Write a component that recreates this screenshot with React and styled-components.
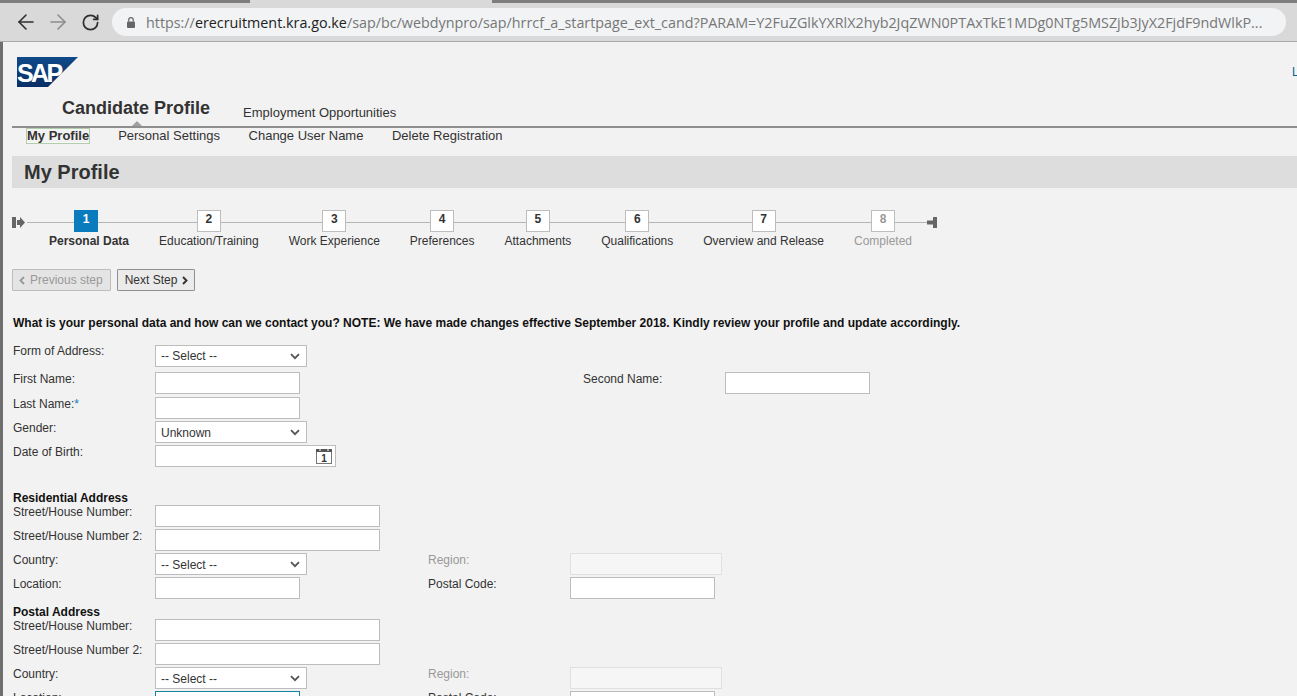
import React from 'react'
import styled, { createGlobalStyle } from 'styled-components'
import { ArrowLeft, ArrowRight, RotateCw } from 'lucide-react'

const GlobalStyle = createGlobalStyle`
  html, body {
    margin: 0;
    padding: 0;
    height: 100%;
    overflow: hidden;
    background: #f2f2f2;
  }
  * { box-sizing: border-box; }
`

const Screen = styled.div`
  width: 1297px;
  height: 696px;
  display: flex;
  flex-direction: column;
  overflow: hidden;
  font-family: "Liberation Sans", Arial, sans-serif;
  font-size: 12px;
  color: #333;
`

const TabStrip = styled.div`
  height: 3px;
  flex: none;
  background: linear-gradient(to right, #7e7e7e 250px, #d9d9d9 250px, #d9d9d9 492px, #7e7e7e 492px);
`

const Toolbar = styled.div`
  height: 39px;
  flex: none;
  display: flex;
  align-items: center;
  background: #d9d9d9;
  border-bottom: 1px solid #a9a9a9;
  padding-left: 14px;
`

const NavButton = styled.span`
  width: 32px;
  height: 24px;
  display: flex;
  align-items: center;
  padding-left: ${p => p.$inset || 0}px;
  color: ${p => p.$off ? '#8d8d8d' : '#2f2f2f'};
`

const UrlBar = styled.div`
  width: 1174px;
  height: 28px;
  margin-left: 2px;
  padding: 0 0 0 15px;
  display: flex;
  align-items: center;
  gap: 11px;
  border-radius: 14px;
  background: #f1f3f4;
  font-family: "Open Sans", sans-serif;
  font-size: 14.33px;
  color: #777;
  white-space: nowrap;
  overflow: hidden;
`

const Host = styled.span`
  color: #222;
`

const Window = styled.div`
  flex: 1;
  min-height: 0;
  border-left: 3px solid #6e6e6e;
  padding-left: 9px;
  overflow: hidden;
`

const Header = styled.header`
  height: 45px;
  padding: 15px 0 0 5px;
  display: flex;
  align-items: flex-start;
  justify-content: space-between;
`

const LogOff = styled.a`
  width: 50px;
  flex: none;
  margin: 8px -45px 0 0;
  font-size: 12px;
  color: #0a5f8f;
  white-space: nowrap;
`

const Tabs = styled.nav`
  height: 41px;
  display: flex;
  align-items: flex-end;
  padding: 0 0 0 50px;
  border-bottom: 2px solid #8e8e8e;
`

const Tab = styled.span`
  position: relative;
  font-size: ${p => p.$active ? '18px' : '13px'};
  font-weight: ${p => p.$active ? 700 : 400};
  line-height: 20px;
  margin: ${p => p.$active ? '0 33px 8px 0' : '0 0 3px 0'};

  ${p => p.$active && `
    &::after {
      content: '';
      position: absolute;
      left: 70px;
      bottom: -8px;
      border: 5px solid transparent;
      border-top: 0;
      border-bottom-color: #a0a0a0;
    }
  `}
`

const SubNav = styled.nav`
  height: 28px;
  display: flex;
  align-items: flex-start;
  padding: 0 0 0 14px;
  font-size: 13px;
`

const SubItem = styled.span`
  height: 16px;
  line-height: 14px;
  margin-right: 28.5px;
  padding-top: 1px;
  ${p => p.$active && `
    font-weight: 700;
    padding-top: 0;
    border: 1px solid #b4ccae;
    box-shadow: inset 0 0 0 1px #f7f9f5;
    margin-right: 28px;
  `}
`

const TitleBar = styled.div`
  height: 32px;
  display: flex;
  align-items: center;
  padding-left: 12px;
  background: #dddddd;
`

const PageTitle = styled.h1`
  margin: 0;
  font-size: 20px;
  font-weight: 700;
  color: #333;
`

const Track = styled.div`
  margin-top: 22px;
  display: flex;
  align-items: flex-start;
`

const TrackEnd = styled.div`
  height: 22px;
  width: ${p => p.$w}px;
  flex: none;
  padding-top: 7px;
  background: ${p => p.$line ? 'linear-gradient(#b5b5b5, #b5b5b5) 0 12px / 100% 1px no-repeat' : 'none'};
`

const Step = styled.div`
  display: flex;
  flex-direction: column;
  align-items: center;
  padding: 0 15px;
  background: linear-gradient(#b5b5b5, #b5b5b5) 0 12px / 100% 1px no-repeat;
`

const Marker = styled.span`
  width: 24px;
  height: 22px;
  margin-left: ${p => p.$state === 'active' ? '-6px' : '0'};
  line-height: 17px;
  text-align: center;
  font-weight: 700;
  background: ${p => p.$state === 'active' ? '#0a7cbd' : '#fff'};
  color: ${p => p.$state === 'active' ? '#fff' : p.$state === 'off' ? '#999' : '#333'};
  border: 1px solid ${p => p.$state === 'active' ? '#0a7cbd' : '#bdbdbd'};
`

const StepLabel = styled.span`
  margin-top: 2px;
  line-height: 14px;
  white-space: nowrap;
  font-weight: ${p => p.$state === 'active' ? 700 : 400};
  color: ${p => p.$state === 'off' ? '#999' : '#333'};
`

const Buttons = styled.div`
  margin-top: 21px;
  display: flex;
  gap: 6px;
`

const StepButton = styled.button`
  height: 22px;
  padding: ${p => p.$off ? '0 7px 0 6px' : '0 6px 0 7px'};
  display: flex;
  align-items: center;
  gap: 5px;
  border: 1px solid ${p => p.$off ? '#bdbdbd' : '#8f8f8f'};
  border-radius: 1px;
  background: ${p => p.$off ? '#e4e4e4' : '#ebebeb'};
  color: ${p => p.$off ? '#999' : '#333'};
  font-family: inherit;
  font-size: 12px;
`

const Form = styled.form`
  padding-left: 1px;
`

const Question = styled.p`
  margin: 25px 0 15px;
  line-height: 14px;
  font-weight: 700;
  color: #111;
`

const Row = styled.div`
  height: ${p => p.$h || 24}px;
  display: grid;
  grid-template-columns: ${p => p.$wide ? '142px 428px 142px auto' : '142px 273px 142px auto'};
  align-items: start;
`

const Label = styled.label`
  line-height: 14px;
  margin-top: ${p => p.$up ? '-1px' : '0'};
  color: ${p => p.$off ? '#999' : '#333'};
  white-space: nowrap;
`

const Required = styled.span`
  color: #0a7cbd;
`

const TextInput = styled.input`
  display: block;
  width: ${p => p.$w || 145}px;
  height: 22px;
  padding: 0 5px;
  border: 1px solid ${p => p.$focus ? '#13839f' : p.$off ? '#e0e0e0' : '#bdbdbd'};
  background: ${p => p.$off ? '#f6f6f6' : '#fff'};
  border-radius: 0;
  outline: none;
`

const SelectBox = styled.select`
  display: block;
  width: 152px;
  height: 22px;
  padding: ${p => p.$tight ? '0' : '1px'} 0 0 5px;
  appearance: none;
  border: 1px solid #bdbdbd;
  border-radius: 0;
  background: #fff url("data:image/svg+xml,%3Csvg xmlns='http://www.w3.org/2000/svg' width='10' height='7' viewBox='0 0 10 7'%3E%3Cpath d='M1 1.2l4 4 4-4' fill='none' stroke='%23555' stroke-width='1.8'/%3E%3C/svg%3E") no-repeat right 6px center;
  color: #333;
  font-family: inherit;
  font-size: 12px;
`

const DateField = styled.div`
  width: 181px;
  height: 22px;
  display: flex;
  align-items: center;
  justify-content: flex-end;
  padding-right: 3px;
  border: 1px solid #bdbdbd;
  background: #fff;
`

const DateInput = styled.input`
  flex: 1;
  min-width: 0;
  height: 100%;
  border: 0;
  outline: none;
  background: transparent;
`

const SectionHead = styled.h3`
  margin: ${p => p.$top + 1}px 0 0;
  font-size: 12px;
  line-height: 14px;
  font-weight: 700;
  color: #111;
`

const SapLogo = () => (
  <svg width="61" height="30" viewBox="0 0 61 30">
    <defs>
      <linearGradient id="sapBlue" x1="0" y1="0" x2="0" y2="1">
        <stop offset="0" stopColor="#0f4a8a" />
        <stop offset="1" stopColor="#0a2f66" />
      </linearGradient>
    </defs>
    <polygon points="0,0 61,0 31,30 0,30" fill="url(#sapBlue)" />
    <text x="0" y="24.5" fontFamily="Liberation Sans, sans-serif" fontWeight="700" fontSize="25" letterSpacing="-2.6" fill="#fff">SAP</text>
  </svg>
)

const LockIcon = () => (
  <svg width="8" height="11" viewBox="0 0 8 11" style={{ flex: 'none' }}>
    <path d="M1.7 4.5V3a2.3 2.3 0 0 1 4.6 0v1.5" fill="none" stroke="#666" strokeWidth="1.2" />
    <rect x="0" y="4.5" width="8" height="6.5" rx="1" fill="#666" />
  </svg>
)

const StartIcon = () => (
  <svg width="13" height="11" viewBox="0 0 13 11" style={{ display: 'block' }}>
    <rect x="0" y="0" width="4" height="11" fill="#666" />
    <path d="M5 3h3V0l5 5.5L8 11V8H5z" fill="#666" />
  </svg>
)

const EndIcon = () => (
  <svg width="10" height="11" viewBox="0 0 10 11" style={{ display: 'block' }}>
    <rect x="0" y="3.5" width="6" height="4" fill="#666" />
    <rect x="6" y="0" width="4" height="11" fill="#666" />
  </svg>
)

const Chevron = ({ left }) => (
  <svg width="6" height="9" viewBox="0 0 6 9">
    <path d={left ? 'M5 1L1.5 4.5 5 8' : 'M1 1l3.5 3.5L1 8'} fill="none" stroke="currentColor" strokeWidth="1.9" />
  </svg>
)

const CalendarIcon = () => (
  <svg width="16" height="15" viewBox="0 0 16 15">
    <rect x="0.5" y="0.5" width="15" height="14" fill="#fff" stroke="#777" />
    <rect x="0" y="0" width="16" height="3" fill="#555" />
    <rect x="3" y="0" width="2" height="2" fill="#aaa" />
    <rect x="11" y="0" width="2" height="2" fill="#aaa" />
    <text x="8" y="13" textAnchor="middle" fontFamily="Liberation Sans, sans-serif" fontWeight="700" fontSize="10" fill="#333">1</text>
  </svg>
)

const steps = [
  { n: 1, label: 'Personal Data', state: 'active' },
  { n: 2, label: 'Education/Training' },
  { n: 3, label: 'Work Experience' },
  { n: 4, label: 'Preferences' },
  { n: 5, label: 'Attachments' },
  { n: 6, label: 'Qualifications' },
  { n: 7, label: 'Overview and Release' },
  { n: 8, label: 'Completed', state: 'off' },
]

const AddressRows = ({ lastFocus }) => (
  <>
    <Row>
      <Label>Street/House Number:</Label>
      <TextInput $w={225} />
    </Row>
    <Row>
      <Label>Street/House Number 2:</Label>
      <TextInput $w={225} />
    </Row>
    <Row>
      <Label>Country:</Label>
      <SelectBox defaultValue=""><option value="">-- Select --</option></SelectBox>
      <Label $off>Region:</Label>
      <TextInput $w={152} $off disabled />
    </Row>
    <Row>
      <Label>Location:</Label>
      <TextInput $focus={lastFocus} />
      <Label>Postal Code:</Label>
      <TextInput />
    </Row>
  </>
)

const App = () => {
  return (
    <Screen>
      <GlobalStyle />
      <TabStrip />
      <Toolbar>
        <NavButton><ArrowLeft size={24} strokeWidth={1.6} /></NavButton>
        <NavButton $off><ArrowRight size={24} strokeWidth={1.6} /></NavButton>
        <NavButton $inset={3}><RotateCw size={19} strokeWidth={2.2} /></NavButton>
        <UrlBar>
          <LockIcon />
          <span>https://<Host>erecruitment.kra.go.ke</Host>/sap/bc/webdynpro/sap/hrrcf_a_startpage_ext_cand?PARAM=Y2FuZGlkYXRlX2hyb2JqZWN0PTAxTkE1MDg0NTg5MSZjb3JyX2FjdF9ndWlkP...</span>
        </UrlBar>
      </Toolbar>
      <Window>
        <Header>
          <SapLogo />
          <LogOff>Log Off</LogOff>
        </Header>
        <Tabs>
          <Tab $active>Candidate Profile</Tab>
          <Tab>Employment Opportunities</Tab>
        </Tabs>
        <SubNav>
          <SubItem $active>My Profile</SubItem>
          <SubItem>Personal Settings</SubItem>
          <SubItem>Change User Name</SubItem>
          <SubItem>Delete Registration</SubItem>
        </SubNav>
        <TitleBar><PageTitle>My Profile</PageTitle></TitleBar>
        <Track>
          <TrackEnd $w={15}><StartIcon /></TrackEnd>
          <TrackEnd $w={7} $line />
          {steps.map(s => (
            <Step key={s.n}>
              <Marker $state={s.state}>{s.n}</Marker>
              <StepLabel $state={s.state}>{s.label}</StepLabel>
            </Step>
          ))}
          <TrackEnd $w={10}><EndIcon /></TrackEnd>
        </Track>
        <Buttons>
          <StepButton type="button" $off disabled><Chevron left />Previous step</StepButton>
          <StepButton type="button">Next Step<Chevron /></StepButton>
        </Buttons>
        <Form>
          <Question>What is your personal data and how can we contact you? NOTE: We have made changes effective September 2018. Kindly review your profile and update accordingly.</Question>
          <Row $h={27}>
            <Label $up>Form of Address:</Label>
            <SelectBox $tight defaultValue=""><option value="">-- Select --</option></SelectBox>
          </Row>
          <Row $h={25} $wide>
            <Label>First Name:</Label>
            <TextInput />
            <Label>Second Name:</Label>
            <TextInput />
          </Row>
          <Row>
            <Label>Last Name:<Required>*</Required></Label>
            <TextInput />
          </Row>
          <Row>
            <Label>Gender:</Label>
            <SelectBox defaultValue="u"><option value="u">Unknown</option></SelectBox>
          </Row>
          <Row>
            <Label>Date of Birth:</Label>
            <DateField>
              <DateInput />
              <CalendarIcon />
            </DateField>
          </Row>
          <SectionHead $top={21}>Residential Address</SectionHead>
          <AddressRows />
          <SectionHead $top={3}>Postal Address</SectionHead>
          <AddressRows lastFocus />
        </Form>
      </Window>
    </Screen>
  )
}

export default App
